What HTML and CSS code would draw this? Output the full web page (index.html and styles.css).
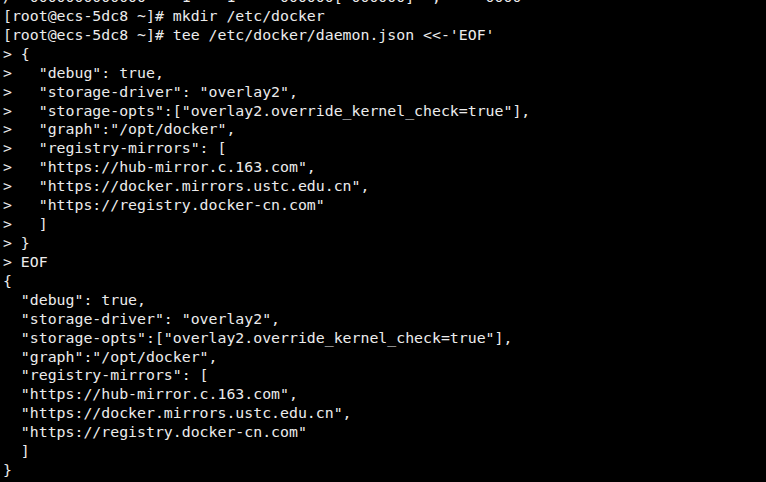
FILE: index.html
```html
<!DOCTYPE html>
<html>
<head>
<meta charset="utf-8">
<link rel="stylesheet" href="styles.css">
</head>
<body>
<pre class="term">/  0000000000000    1    1     000000[ 000000]  ,     0000
[root@ecs-5dc8 ~]# mkdir /etc/docker
[root@ecs-5dc8 ~]# tee /etc/docker/daemon.json &lt;&lt;-'EOF'
&gt; {
&gt;   "debug": true,
&gt;   "storage-driver": "overlay2",
&gt;   "storage-opts":["overlay2.override_kernel_check=true"],
&gt;   "graph":"/opt/docker",
&gt;   "registry-mirrors": [
&gt;   "https://hub-mirror.c.163.com",
&gt;   "https://docker.mirrors.ustc.edu.cn",
&gt;   "https://registry.docker-cn.com"
&gt;   ]
&gt; }
&gt; EOF
{
  "debug": true,
  "storage-driver": "overlay2",
  "storage-opts":["overlay2.override_kernel_check=true"],
  "graph":"/opt/docker",
  "registry-mirrors": [
  "https://hub-mirror.c.163.com",
  "https://docker.mirrors.ustc.edu.cn",
  "https://registry.docker-cn.com"
  ]
}</pre>
</body>
</html>
```
FILE: styles.css
```css
html, body {
  margin: 0;
  padding: 0;
  background: #000;
  height: 100%;
  overflow: hidden;
}
.term {
  margin: -12px 0 0 0;
  padding: 0 0 0 3px;
  font-family: "DejaVu Sans Mono", "Liberation Mono", monospace;
  font-size: 14.85px;
  line-height: 18.92px;
  color: #ececec;
  white-space: pre;
}
```
